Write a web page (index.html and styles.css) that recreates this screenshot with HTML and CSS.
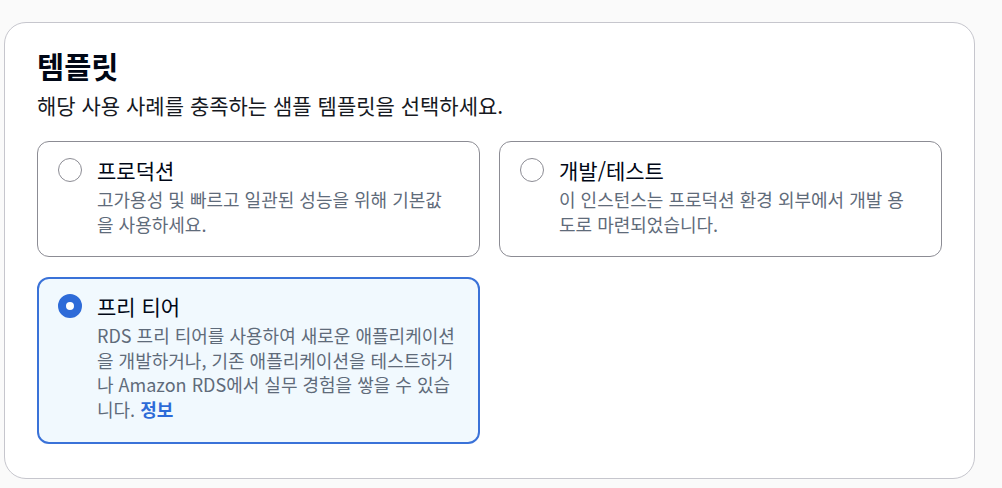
FILE: index.html
```html
<!DOCTYPE html>
<html lang="ko">
<head>
<meta charset="utf-8">
<link rel="stylesheet" href="styles.css">
</head>
<body>
<section class="panel">
  <h2 class="title">템플릿</h2>
  <p class="subtitle">해당 사용 사례를 충족하는 샘플 템플릿을 선택하세요.</p>
  <div class="tiles">
    <label class="tile">
      <span class="radio"></span>
      <span class="body">
        <span class="label">프로덕션</span>
        <span class="desc">고가용성 및 빠르고 일관된 성능을 위해 기본값을 사용하세요.</span>
      </span>
    </label>
    <label class="tile">
      <span class="radio"></span>
      <span class="body">
        <span class="label">개발/테스트</span>
        <span class="desc">이 인스턴스는 프로덕션 환경 외부에서 개발 용도로 마련되었습니다.</span>
      </span>
    </label>
    <label class="tile selected">
      <span class="radio checked"></span>
      <span class="body">
        <span class="label">프리 티어</span>
        <span class="desc">RDS 프리 티어를 사용하여 새로운 애플리케이션을 개발하거나, 기존 애플리케이션을 테스트하거나 Amazon RDS에서 실무 경험을 쌓을 수 있습니다. <a class="info">정보</a></span>
      </span>
    </label>
  </div>
</section>
</body>
</html>
```

FILE: styles.css
```css
* { box-sizing: border-box; }
html, body { margin: 0; padding: 0; }
body {
  background: #fafafa;
  font-family: "Noto Sans CJK KR", "Noto Sans", sans-serif;
  color: #000716;
  padding: 22px 0 0 4px;
  height: 488px;
  overflow: hidden;
}
.panel {
  width: 971px;
  height: 457px;
  background: #fff;
  border: 1px solid #c6c6cd;
  border-radius: 22px;
  padding: 24px 32px 0 32px;
}
.title {
  margin: 0;
  font-size: 29.5px;
  line-height: 36px;
  font-weight: 700;
}
.subtitle {
  margin: 9px 0 0;
  font-size: 21px;
  line-height: 26px;
  color: #16191f;
}
.tiles {
  margin-top: 23px;
  display: grid;
  grid-template-columns: 443px 443px;
  column-gap: 19px;
  row-gap: 20px;
}
.tile {
  display: flex;
  gap: 15px;
  border: 1px solid #8c8c94;
  border-radius: 12px;
  padding: 15px 25px 18px 20px;
  min-height: 116px;
}
.tile.selected {
  border: 2px solid #3a72d8;
  background: #f1f9fe;
  padding: 14px 15px 17px 19px;
  min-height: 167px;
}
.radio {
  flex: none;
  width: 24px;
  height: 24px;
  margin-top: 1px;
  border-radius: 50%;
  border: 1.5px solid #8c8c94;
  background: #fff;
}
.radio.checked {
  border: 8px solid #2e6bd8;
}
.body {
  display: flex;
  flex-direction: column;
}
.label {
  font-size: 21px;
  line-height: 26px;
  color: #000716;
}
.desc {
  margin-top: 4px;
  font-size: 18px;
  line-height: 24.5px;
  color: #5f6b7a;
}
.info {
  display: inline-block;
  color: #2d6bd8;
  font-weight: 700;
}
```
